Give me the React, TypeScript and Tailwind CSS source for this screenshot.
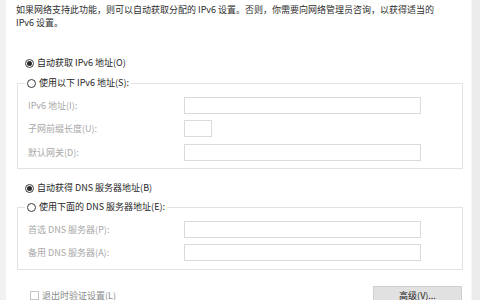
import React from "react";

const font = { fontFamily: '"Noto Sans CJK SC", "Noto Sans", sans-serif' };

const Radio = ({ checked, label }: { checked?: boolean; label: string }) => (
  <div className="flex items-center h-[14px] gap-[3px] text-[9px] text-[#262626] whitespace-nowrap">
    <span className="flex items-center justify-center w-[9px] h-[9px] rounded-full border border-[#3a3a3a] bg-white">
      {checked && <span className="w-[5px] h-[5px] rounded-full bg-[#2a2a2a]" />}
    </span>
    <span>{label}</span>
  </div>
);

const Field = ({ label, small, mt }: { label: string; small?: boolean; mt: string }) => (
  <div className={`flex items-center h-[17px] ${mt}`}>
    <div className="w-[156px] text-[9px] text-[#a8a8a8] whitespace-nowrap">{label}</div>
    <div className={`h-[17px] border border-[#dadada] bg-white ${small ? "w-[28px]" : "w-[237px]"}`} />
  </div>
);

export default function App() {
  return (
    <div className="flex w-[480px] h-[300px] overflow-hidden bg-white" style={font}>
      {/* 左侧窗口边 */}
      <div className="w-[6px] bg-[#f1f1f1]" />

      <div className="flex-1 flex flex-col">
        <p className="pt-[3px] pl-[10px] text-[9px] leading-[13px] text-[#2e2e2e] whitespace-nowrap">
          如果网络支持此功能，则可以自动获取分配的 IPv6 设置。否则，你需要向网络管理员咨询，以获得适当的
          <br />
          IPv6 设置。
        </p>

        <div className="mt-[27px] ml-[19px]">
          <Radio checked label="自动获取 IPv6 地址(O)" />
        </div>

        <fieldset className="mt-[6px] ml-[11px] w-[446px] border border-[#e3e3e3] pl-[10px] pt-[7px] pb-[7px]">
          <legend className="ml-[-3px] px-[2px] bg-white">
            <Radio label="使用以下 IPv6 地址(S):" />
          </legend>
          <Field label="IPv6 地址(I):" mt="" />
          <Field label="子网前缀长度(U):" small mt="mt-[6px]" />
          <Field label="默认网关(D):" mt="mt-[7px]" />
        </fieldset>

        <div className="mt-[12px] ml-[19px]">
          <Radio checked label="自动获得 DNS 服务器地址(B)" />
        </div>

        <fieldset className="mt-[5px] ml-[11px] w-[446px] border border-[#e3e3e3] pl-[10px] pt-[7px] pb-[8px]">
          <legend className="ml-[-3px] px-[2px] bg-white">
            <Radio label="使用下面的 DNS 服务器地址(E):" />
          </legend>
          <Field label="首选 DNS 服务器(P):" mt="" />
          <Field label="备用 DNS 服务器(A):" mt="mt-[6px]" />
        </fieldset>

        <div className="flex items-start mt-[16px]">
          <div className="flex items-center gap-[3px] ml-[24px] mt-[3px] text-[9px] text-[#8a8a8a] whitespace-nowrap">
            <span className="w-[9px] h-[9px] border border-[#c4c4c4] bg-white" />
            <span>退出时验证设置(L)</span>
          </div>
          <button className="ml-auto mr-[9px] w-[89px] h-[20px] bg-[#e1e1e1] border border-[#d0d0d0] text-[9px] text-[#222]">
            高级(V)...
          </button>
        </div>
      </div>

      {/* 右侧滚动条 */}
      <div className="w-[9px] border-l border-[#f6f6f6] bg-[#ececec]" />
    </div>
  );
}
